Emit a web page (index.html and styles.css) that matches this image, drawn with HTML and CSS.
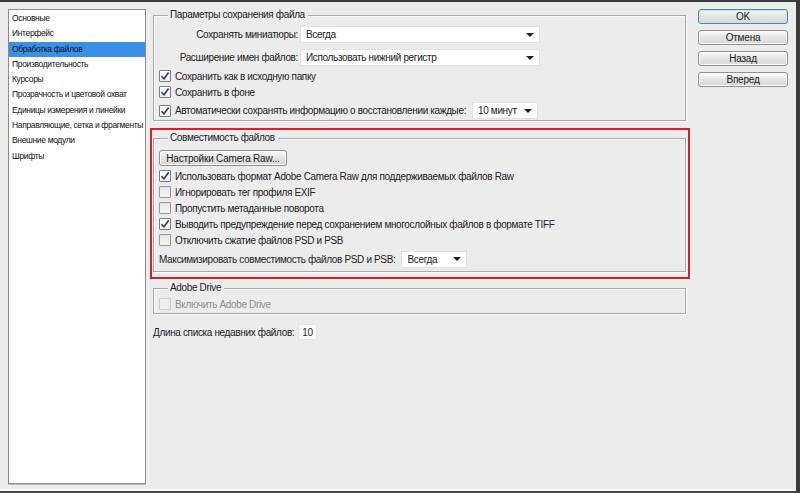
FILE: index.html
```html
<!DOCTYPE html>
<html>
<head>
    <title>Установки</title>
    <link rel="stylesheet" href="styles.css">
</head>
<body>
    <div class="window">
        <ul class="nav">
            <li>Основные</li>
            <li>Интерфейс</li>
            <li class="active">Обработка файлов</li>
            <li>Производительность</li>
            <li>Курсоры</li>
            <li>Прозрачность и цветовой охват</li>
            <li>Единицы измерения и линейки</li>
            <li>Направляющие, сетка и фрагменты</li>
            <li>Внешние модули</li>
            <li>Шрифты</li>
        </ul>

        <div class="main">
            <fieldset class="group group-save">
                <legend>Параметры сохранения файла</legend>
                <div class="field-row first">
                    <span class="field-label">Сохранять миниатюры:</span>
                    <div class="select select-wide"><span>Всегда</span><i class="arrow"></i></div>
                </div>
                <div class="field-row">
                    <span class="field-label">Расширение имен файлов:</span>
                    <div class="select select-wide"><span>Использовать нижний регистр</span><i class="arrow"></i></div>
                </div>
                <div class="check-row gap">
                    <span class="cb checked"><svg width="10" height="10" viewBox="0 0 10 10"><path d="M1.5 5.2 L4 7.8 L8.6 1.6" /></svg></span>
                    <span>Сохранить как в исходную папку</span>
                </div>
                <div class="check-row">
                    <span class="cb checked"><svg width="10" height="10" viewBox="0 0 10 10"><path d="M1.5 5.2 L4 7.8 L8.6 1.6" /></svg></span>
                    <span>Сохранить в фоне</span>
                </div>
                <div class="check-row tall">
                    <span class="cb checked"><svg width="10" height="10" viewBox="0 0 10 10"><path d="M1.5 5.2 L4 7.8 L8.6 1.6" /></svg></span>
                    <span>Автоматически сохранять информацию о восстановлении каждые:</span>
                    <div class="select select-small push"><span>10 минут</span><i class="arrow"></i></div>
                </div>
            </fieldset>

            <div class="highlight">
                <fieldset class="group group-compat">
                    <legend>Совместимость файлов</legend>
                    <button class="btn btn-raw">Настройки Camera Raw...</button>
                    <div class="check-row gap">
                        <span class="cb checked"><svg width="10" height="10" viewBox="0 0 10 10"><path d="M1.5 5.2 L4 7.8 L8.6 1.6" /></svg></span>
                        <span>Использовать формат Adobe Camera Raw для поддерживаемых файлов Raw</span>
                    </div>
                    <div class="check-row">
                        <span class="cb"></span>
                        <span>Игнорировать тег профиля EXIF</span>
                    </div>
                    <div class="check-row">
                        <span class="cb"></span>
                        <span>Пропустить метаданные поворота</span>
                    </div>
                    <div class="check-row">
                        <span class="cb checked"><svg width="10" height="10" viewBox="0 0 10 10"><path d="M1.5 5.2 L4 7.8 L8.6 1.6" /></svg></span>
                        <span>Выводить предупреждение перед сохранением многослойных файлов в формате TIFF</span>
                    </div>
                    <div class="check-row">
                        <span class="cb"></span>
                        <span>Отключить сжатие файлов PSD и PSB</span>
                    </div>
                    <div class="max-row">
                        <span>Максимизировать совместимость файлов PSD и PSB:</span>
                        <div class="select select-small"><span>Всегда</span><i class="arrow"></i></div>
                    </div>
                </fieldset>
            </div>

            <fieldset class="group group-drive">
                <legend>Adobe Drive</legend>
                <div class="check-row disabled">
                    <span class="cb"></span>
                    <span>Включить Adobe Drive</span>
                </div>
            </fieldset>

            <div class="recent-row">
                <span>Длина списка недавних файлов:</span>
                <div class="num-input">10</div>
            </div>
        </div>

        <div class="actions">
            <button class="btn btn-default">OK</button>
            <button class="btn">Отмена</button>
            <button class="btn">Назад</button>
            <button class="btn">Вперед</button>
        </div>
    </div>
</body>
</html>
```

FILE: styles.css
```css
html, body {
  margin: 0;
  background-color: #ececec;
}

body {
  font-family: "Liberation Sans", Arial, sans-serif;
  font-size: 10px;
  letter-spacing: -0.35px;
  color: #222;
}

.window {
  display: flex;
  width: 800px;
  height: 493px;
  box-sizing: border-box;
  border-top: 2px solid #3d3d3d;
  border-right: 4px solid #3a3a3a;
  border-bottom: 2px solid #4a4a4a;
  padding: 7px 0 5px 8px;
  box-shadow: inset 0 -2px 0 #f7f7f7;
}

/* left list of sections */
.nav {
  list-style: none;
  margin: 0;
  padding: 1px 0 0 0;
  width: 138px;
  box-sizing: border-box;
  background-color: #fff;
  border: 1px solid #8c8c8c;
  box-shadow: 0 1px 0 #bdbdbd;
  height: 475px;
}

.nav li {
  height: 15.3px;
  line-height: 15px;
  padding-left: 3px;
  font-size: 8.5px;
  letter-spacing: -0.35px;
  color: #111;
  white-space: nowrap;
}

.nav li.active {
  background-color: #3990ea;
}

/* middle column */
.main {
  width: 533px;
  margin-left: 7px;
  display: flex;
  flex-direction: column;
}

.group {
  margin: 0;
  min-width: 0;
  border: 1px solid #a8a8a8;
  box-shadow: 1px 1px 0 #fafafa, inset 1px 1px 0 #fafafa;
  padding: 0 0 0 5px;
}

.group legend {
  margin-left: 9px;
  padding: 0 3px 0 2px;
  line-height: 12px;
  background-color: #ececec;
}

.group-save {
  padding-top: 5px;
}

.field-row {
  display: flex;
  align-items: center;
  height: 17px;
  margin-top: 6px;
}

.field-row.first {
  margin-top: 0;
}

.field-label {
  width: 139px;
  text-align: right;
  margin-right: 2px;
}

.select {
  display: flex;
  align-items: center;
  height: 17px;
  box-sizing: border-box;
  background-color: #fff;
  border: 1px solid #e0e0e0;
  padding: 0 5px 0 5px;
}

.select .arrow {
  margin-left: auto;
  width: 0;
  height: 0;
  border-left: 4px solid transparent;
  border-right: 4px solid transparent;
  border-top: 4px solid #1e1e1e;
}

.select-wide {
  width: 240px;
}

.select-small {
  width: 66px;
  margin-left: 4px;
}

.select-small.push {
  margin-left: auto;
}

.check-row {
  display: flex;
  align-items: center;
  height: 16px;
}

.check-row.gap {
  margin-top: 2px;
}

.check-row.tall {
  width: 379px;
  height: 19px;
  margin-top: 1px;
}

.cb {
  display: flex;
  align-items: center;
  justify-content: center;
  flex-shrink: 0;
  width: 12px;
  height: 12px;
  box-sizing: border-box;
  margin-right: 4px;
  border: 1px solid #9a9a9a;
  border-radius: 1px;
  background: linear-gradient(#e4e4e4, #f6f6f6);
}

.cb.checked {
  background: linear-gradient(#ffffff, #e9eef4);
  border-color: #7d7d7d;
}

.cb svg path {
  fill: none;
  stroke: #1d3f7c;
  stroke-width: 1.6;
}

.check-row.disabled {
  color: #8d8d8d;
}

.check-row.disabled .cb {
  border-color: #c9c9c9;
  background: #eeeeee;
}

/* red frame around the compatibility group */
.highlight {
  margin: 7px -4px 0 -3px;
  border: 2px solid #d3232c;
  padding: 2px 2px 5px 1px;
}

.group-compat {
  padding-top: 6px;
  padding-bottom: 3px;
}

.btn {
  font-family: "Liberation Sans", Arial, sans-serif;
  font-size: 10px;
  letter-spacing: -0.2px;
  color: #1a1a1a;
  height: 16px;
  padding: 0;
  border: 1px solid #8f8f8f;
  border-radius: 3px;
  background: linear-gradient(#fbfbfb, #e3e3e3 50%, #d9d9d9);
  box-shadow: inset 0 0 0 1px #fdfdfd;
  cursor: pointer;
}

.btn-raw {
  width: 128px;
  align-self: flex-start;
}

.max-row {
  display: flex;
  align-items: center;
  height: 18px;
  margin-top: 2px;
}

.max-row .select-small {
  margin-left: 6px;
}

.group-drive {
  margin-top: 3px;
  padding-top: 2px;
  padding-bottom: 1px;
}

.recent-row {
  display: flex;
  align-items: center;
  height: 18px;
  margin-top: 9px;
}

.num-input {
  width: 19px;
  height: 16px;
  box-sizing: border-box;
  margin-left: 4px;
  padding-left: 3px;
  line-height: 16px;
  background-color: #fff;
  border: 1px solid #e4e4e4;
}

/* right column of buttons */
.actions {
  width: 90px;
  margin-left: 12px;
  display: flex;
  flex-direction: column;
  gap: 6px;
}

.actions .btn {
  height: 15px;
  width: 90px;
}

.btn-default {
  border-color: #3f8fa8;
  box-shadow: inset 0 0 0 1px #bfe3ee;
}
```
